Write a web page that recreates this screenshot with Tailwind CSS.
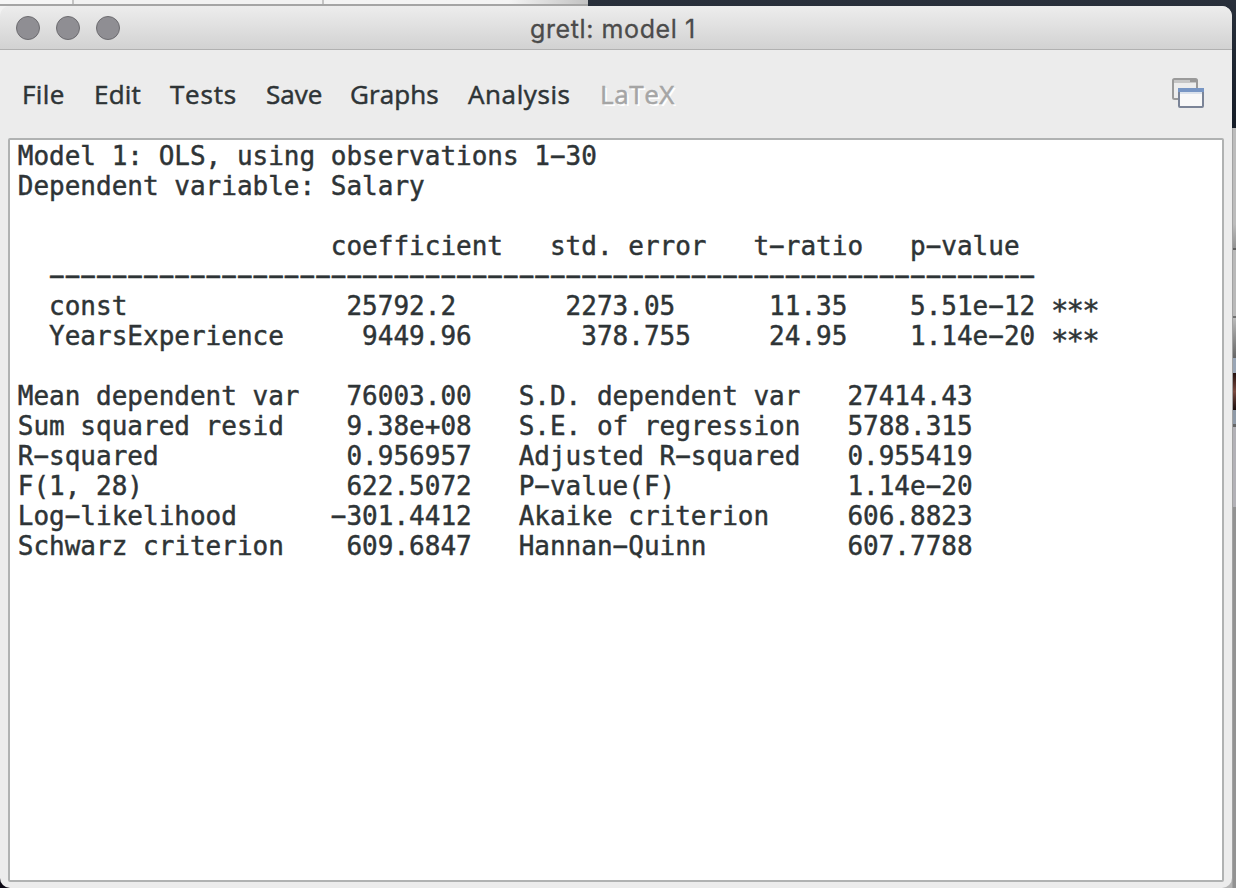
<!DOCTYPE html>
<html lang="en">
<head>
<meta charset="utf-8">
<title>gretl: model 1</title>
<script src="https://cdn.jsdelivr.net/npm/@tailwindcss/browser@4"></script>
</head>
<body class="relative h-[888px] w-[1236px] overflow-hidden bg-[#b5b5b5]">
<!-- desktop behind the window -->
<div class="absolute inset-x-0 top-0 h-[128px] bg-linear-to-b from-[#29303b] to-[#151c27]"></div>
<div class="absolute left-0 top-0 flex h-5 w-[588px] bg-[#f2f2f2]">
  <div class="h-1 w-[72px] bg-[#f6f6f6]"></div><div class="h-1 w-0.5 bg-[#c4c4c4]"></div>
  <div class="h-1 w-[248px]"></div><div class="h-1 w-0.5 bg-[#c4c4c4]"></div>
  <div class="h-1 flex-1 bg-linear-to-r from-[#f4f4f4] from-70% to-[#c2c2c2]"></div>
</div>
<div class="absolute left-0 top-[4px] h-[2px] w-[588px] bg-[#a5a5a5]"></div>
<div class="absolute right-0 top-[128px] flex h-[760px] w-1 flex-col border-l border-black/10">
  <div class="h-[120px] bg-linear-to-b from-[#bcbcbc] from-80% to-[#929292]"></div>
  <div class="h-[2px] bg-[#606060]"></div>
  <div class="h-[66px] bg-[#b9b9b9]"></div>
  <div class="h-[2px] bg-[#707070]"></div>
  <div class="h-[40px] bg-linear-to-b from-[#bbb] to-[#666]"></div>
  <div class="h-[15px] bg-[#99a5b5]"></div>
  <div class="h-[37px] bg-linear-to-b from-[#24100e] via-[#7a4a40] to-[#1c0e0e]"></div>
  <div class="h-[14px] bg-[#8f9aa8]"></div>
  <div class="h-[3px] bg-[#666]"></div>
  <div class="h-[80px] bg-[#b2b1b6]"></div>
  <div class="flex-1 bg-[#929292]"></div>
</div>
<div class="absolute bottom-0 left-0 size-3 bg-[#0c0814]"></div>

<main class="relative mt-1.5 flex h-[882px] w-[1232px] flex-col rounded-[10px] bg-[#ececec]">
  <header class="flex h-11 shrink-0 items-center rounded-t-[10px] border-b border-[#b1b1b1] bg-linear-to-b from-[#ededed] to-[#d2d2d2] px-4 pt-px">
    <div class="flex w-[104px] gap-4">
      <i class="size-6 rounded-full border border-[#6d6c70] bg-[#8f8e93]"></i>
      <i class="size-6 rounded-full border border-[#6d6c70] bg-[#8f8e93]"></i>
      <i class="size-6 rounded-full border border-[#6d6c70] bg-[#8f8e93]"></i>
    </div>
    <h1 class="ml-[410px] whitespace-nowrap pt-0.5 font-['Inter',sans-serif] text-[25px] leading-none tracking-[0.6px] text-[#4b4b4b] [-webkit-text-stroke:0.3px_currentColor]">gretl: model 1</h1>
  </header>
  <nav class="flex h-[88px] shrink-0 items-center whitespace-nowrap pl-[22px] pr-7 font-['Open_Sans',sans-serif] text-[26px] font-medium text-[#2e3436] [-webkit-text-stroke:0.5px_currentColor]">
    <span class="w-[72px] tracking-[0.4px]">File</span>
    <span class="w-[76px] tracking-[0.2px]">Edit</span>
    <span class="w-[96px] tracking-[0.8px]">Tests</span>
    <span class="w-[84px]">Save</span>
    <span class="w-[118px] tracking-[0.1px]">Graphs</span>
    <span class="w-[132px] tracking-[0.6px]">Analysis</span>
    <span class="tracking-[0.6px] text-[#a5a5a5] [text-shadow:2px_2px_0_#fff]">LaTeX</span>
    <svg class="mb-0.5 ml-auto" width="32" height="31" viewBox="0 0 32 31">
      <rect x="1" y="1" width="24" height="20" rx="1.5" fill="#ededed" stroke="#9a9a9a" stroke-width="2"/>
      <path d="M2 2h22v3H2z" fill="#c6c6c6"/><path d="M18 1h6v3h-6z" fill="#999"/>
      <rect x="7" y="11" width="24" height="18" rx="1" fill="#f8f8f8" stroke="#7b8497" stroke-width="2"/>
      <path d="M6 10h26v4H6z" fill="#7896c4"/><path d="M8 14h22v2H8z" fill="#dbe2ec"/>
    </svg>
  </nav>
  <section class="mx-2 h-[744px] rounded-[2px] border-2 border-[#b0b2b2] bg-white pl-[7.75px] pt-px">
<pre class="font-['DejaVu_Sans_Mono',monospace] text-[26px] leading-[30px] text-[#2e3436] [-webkit-text-stroke:0.45px_currentColor]">Model 1: OLS, using observations 1−30
Dependent variable: Salary

                    coefficient   std. error   t−ratio   p−value
  −−−−−−−−−−−−−−−−−−−−−−−−−−−−−−−−−−−−−−−−−−−−−−−−−−−−−−−−−−−−−−−
  const              25792.2       2273.05      11.35    5.51e−12 <span class="text-[29px] leading-none tracking-[-1.8px]">∗∗∗</span>
  YearsExperience     9449.96       378.755     24.95    1.14e−20 <span class="text-[29px] leading-none tracking-[-1.8px]">∗∗∗</span>

Mean dependent var   76003.00   S.D. dependent var   27414.43
Sum squared resid    9.38e+08   S.E. of regression   5788.315
R−squared            0.956957   Adjusted R−squared   0.955419
F(1, 28)             622.5072   P−value(F)           1.14e−20
Log−likelihood      −301.4412   Akaike criterion     606.8823
Schwarz criterion    609.6847   Hannan−Quinn         607.7788</pre>
  </section>
</main>
</body>
</html>
